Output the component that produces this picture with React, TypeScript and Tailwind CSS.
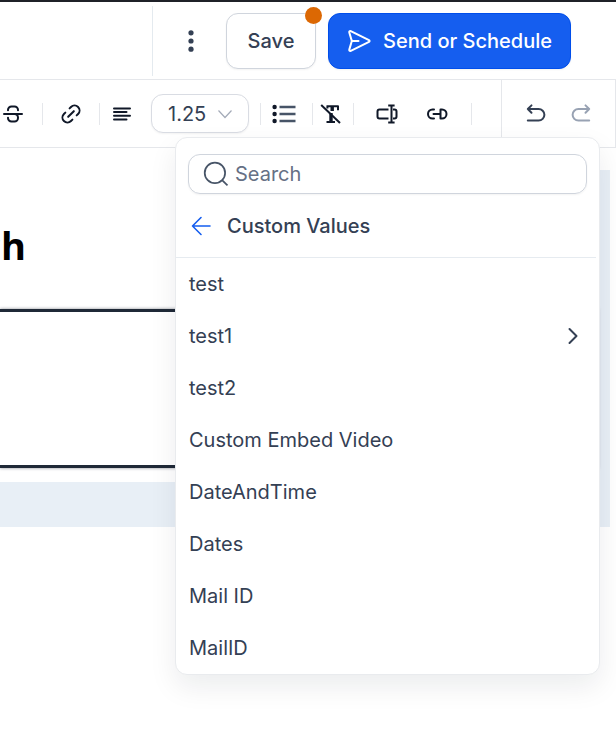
import { useState } from 'react'
import type { ReactNode } from 'react'

interface CustomValue {
  label: string
  hasChildren?: boolean
}

const CUSTOM_VALUES: CustomValue[] = [
  { label: 'test' },
  { label: 'test1', hasChildren: true },
  { label: 'test2' },
  { label: 'Custom Embed Video' },
  { label: 'DateAndTime' },
  { label: 'Dates' },
  { label: 'Mail ID' },
  { label: 'MailID' },
]

interface IconProps {
  children: ReactNode
  className?: string
}

function Icon({ children, className = 'size-6' }: IconProps) {
  return (
    <svg
      viewBox="0 0 24 24"
      fill="none"
      stroke="currentColor"
      strokeWidth="2"
      strokeLinecap="round"
      strokeLinejoin="round"
      aria-hidden="true"
      className={`shrink-0 ${className}`}
    >
      {children}
    </svg>
  )
}

function Divider() {
  return <span className="h-[22px] w-px shrink-0 bg-gray-200" />
}

function Header() {
  return (
    <header className="flex h-20 items-center justify-end border-t-2 border-b border-t-[#1f2128] border-b-gray-200 pr-[45px]">
      <div className="flex h-[70px] items-center gap-3 border-l border-[#e4eaef] pl-[26px]">
        <button aria-label="More options" className="mr-[11px] flex w-6 justify-center text-[#344054]">
          <Icon>
            <g fill="currentColor" stroke="none">
              <circle cx="12" cy="3.8" r="2.6" />
              <circle cx="12" cy="12" r="2.6" />
              <circle cx="12" cy="20.2" r="2.6" />
            </g>
          </Icon>
        </button>
        <div className="relative">
          <button className="h-14 w-[90px] rounded-xl border border-[#d0d5dd] bg-white text-xl font-medium text-[#344054] shadow-xs">
            Save
          </button>
          <span className="absolute -top-1.5 -right-1.5 size-[17px] rounded-full bg-[#dc6803]" />
        </div>
        <button className="flex h-14 w-[243px] items-center justify-center gap-3 rounded-xl border border-[#004eeb] bg-[#155eef] text-xl font-medium text-white shadow-xs">
          <Icon>
            <path d="M5 12h6.5M4.6 12.8 2.3 20.6c-.3 1.1.5 1.8 1.5 1.3L22 12.9c.8-.4.8-1.4 0-1.8L3.8 2.1c-1-.5-1.8.2-1.5 1.3l2.3 7.8c.2.5.2 1.1 0 1.6Z" />
          </Icon>
          Send or Schedule
        </button>
      </div>
    </header>
  )
}

function Toolbar() {
  return (
    <div className="flex h-[68px] items-stretch border-r border-b border-gray-200 text-[#101828]">
      <div className="flex flex-1 items-center">
        <button aria-label="Strikethrough" className="flex w-[42px] justify-center pr-4">
          <Icon>
            <path d="M3 12h18M7 8.2V8a3.5 3.5 0 0 1 3.5-3.5h3A3.5 3.5 0 0 1 17 8v.2M7 15.8v.2a3.5 3.5 0 0 0 3.5 3.5h3a3.5 3.5 0 0 0 3.5-3.5v-.5a3.5 3.5 0 0 0-3.5-3.5" />
          </Icon>
        </button>
        <Divider />
        <button aria-label="Insert link" className="flex w-14 justify-center">
          <Icon>
            <g transform="rotate(-45 12 12)">
              <path d="M9 17H7A5 5 0 0 1 7 7h2M15 7h2a5 5 0 1 1 0 10h-2M8 12h8" />
            </g>
          </Icon>
        </button>
        <Divider />
        <button aria-label="Align left" className="mr-[7px] flex w-11 justify-center">
          <Icon>
            <path d="M4 6.4h16M4 10h12.5M4 13.7h16M4 17.4h12.5" />
          </Icon>
        </button>
        <div className="relative mr-[11px] flex items-center">
          <select
            aria-label="Line height"
            defaultValue="1.25"
            className="h-[39px] w-[98px] appearance-none rounded-xl border border-[#d9dce3] bg-white pl-4 text-xl text-[#344054] shadow-xs"
          >
            <option>1</option>
            <option>1.25</option>
            <option>1.5</option>
          </select>
          <svg
            viewBox="0 0 16 16"
            fill="none"
            stroke="currentColor"
            strokeWidth="1.2"
            aria-hidden="true"
            className="pointer-events-none absolute right-4 size-4 text-[#a4abb8]"
          >
            <path d="m1.5 4.5 6.5 7 6.5-7" />
          </svg>
        </div>
        <Divider />
        <button aria-label="Bulleted list" className="flex w-[51px] justify-center pr-[5px]">
          <Icon>
            <g fill="currentColor" stroke="none">
              <circle cx="2.6" cy="5" r="2.2" />
              <circle cx="2.6" cy="12" r="2.2" />
              <circle cx="2.6" cy="19" r="2.2" />
            </g>
            <path stroke="#475467" strokeWidth="2.4" strokeLinecap="butt" d="M7.5 5h16M7.5 12h16M7.5 19h16" />
          </Icon>
        </button>
        <Divider />
        <button aria-label="Clear formatting" className="flex w-10 justify-center pr-[5px]">
          <Icon>
            <path strokeLinecap="butt" d="M2.2 3 21 21" />
            <path strokeLinecap="butt" d="M7.5 4.2H19v4M13 4.5v4M8.4 4v2.5" />
            <path strokeWidth="3.4" strokeLinecap="butt" d="M13.2 4v5M12 11v9" />
            <path strokeLinecap="butt" d="M7.5 20H16" />
          </Icon>
        </button>
        <Divider />
        <button aria-label="Custom field" className="flex w-[66px] justify-center">
          <Icon>
            <path
              strokeLinecap="butt"
              d="M13.5 7.5h-9a2 2 0 0 0-2 2v5a2 2 0 0 0 2 2h9M18 7.5h1.5a2 2 0 0 1 2 2v5a2 2 0 0 1-2 2H18M16.5 3.5v17M13.2 3.5h6.4M13.2 20.5h6.4"
            />
          </Icon>
        </button>
        <button aria-label="Trigger link" className="mr-[17px] flex w-[34px] justify-center">
          <Icon>
            <path d="M9 7.5H7.5a4.5 4.5 0 0 0 0 9H9M8.5 12h7M15.5 7.5h1.5a4.5 4.5 0 0 1 0 9h-1.5z" />
          </Icon>
        </button>
        <Divider />
      </div>
      <div className="flex items-center gap-[21px] border-l border-gray-200 px-[22px]">
        <button aria-label="Undo" className="text-[#344054]">
          <Icon>
            <path d="M7.5 3.4 3.8 7l3.7 3.7M3.8 7h10.8a5.8 5.8 0 0 1 0 11.6H3.8" />
          </Icon>
        </button>
        <button aria-label="Redo" className="text-[#98a2b3]">
          <Icon>
            <path d="M16.5 3.4 20.2 7l-3.7 3.7M20.2 7H9.4a5.8 5.8 0 0 0 0 11.6h10.8" />
          </Icon>
        </button>
      </div>
    </div>
  )
}

function CustomValuesMenu() {
  const [query, setQuery] = useState('')
  const values = CUSTOM_VALUES.filter((value) =>
    value.label.toLowerCase().includes(query.toLowerCase())
  )

  return (
    <div className="absolute top-[57px] right-4 left-[175px] z-10 rounded-xl border border-[#e9ebee] bg-white text-[#344054] shadow-[0_12px_28px_rgba(16,24,40,0.08)]">
      <label className="mx-3 mt-4 flex h-10 items-center gap-1.5 rounded-xl border border-[#d0d5dd] px-[14px] shadow-xs">
        <svg
          viewBox="0 0 24 24"
          fill="none"
          stroke="#475467"
          strokeWidth="1.6"
          aria-hidden="true"
          className="size-[26px] shrink-0"
        >
          <circle cx="11" cy="11" r="9.4" />
          <path d="m17.6 17.6 5 5" />
        </svg>
        <input
          type="text"
          aria-label="Search"
          placeholder="Search"
          value={query}
          onChange={(e) => setQuery(e.target.value)}
          className="w-full min-w-0 text-xl outline-none placeholder:text-[#667085]"
        />
      </label>
      <div className="mr-[3px] flex h-16 items-center gap-[14px] border-b border-[#e6ebf0] pl-[13px]">
        <button aria-label="Back" className="text-[#155eef]">
          <Icon>
            <path strokeWidth="1.6" d="M21 12H3.5M12 3.5 3.5 12l8.5 8.5" />
          </Icon>
        </button>
        <h2 className="text-xl font-medium">Custom Values</h2>
      </div>
      <ul>
        {values.map((value) => (
          <li key={value.label}>
            <button className="flex h-[52px] w-full items-center justify-between pr-[14px] pl-[13px] text-left text-xl">
              {value.label}
              {value.hasChildren && (
                <Icon>
                  <path d="m8.5 5 7 7-7 7" />
                </Icon>
              )}
            </button>
          </li>
        ))}
      </ul>
    </div>
  )
}

function EmailCanvas() {
  return (
    <main className="mt-[22px] mr-1.5 bg-[#e8eff6] pr-3 pb-[45px]">
      <div className="bg-white pb-[14px]">
        <div className="flex h-[139px] items-center">
          <h1 className="flex w-[26px] justify-end pt-2.5 font-['Open_Sans',sans-serif] text-[38px] leading-10 font-bold text-black">
            ch
          </h1>
        </div>
        <div className="h-[159px] border-y-[3px] border-[#1f2937] shadow-[0_0_3px_rgba(16,24,40,0.5)]" />
      </div>
    </main>
  )
}

export default function App() {
  return (
    <div className="min-h-screen overflow-hidden bg-white font-['Inter',sans-serif]">
      <Header />
      <div className="relative">
        <Toolbar />
        <CustomValuesMenu />
      </div>
      <EmailCanvas />
    </div>
  )
}
